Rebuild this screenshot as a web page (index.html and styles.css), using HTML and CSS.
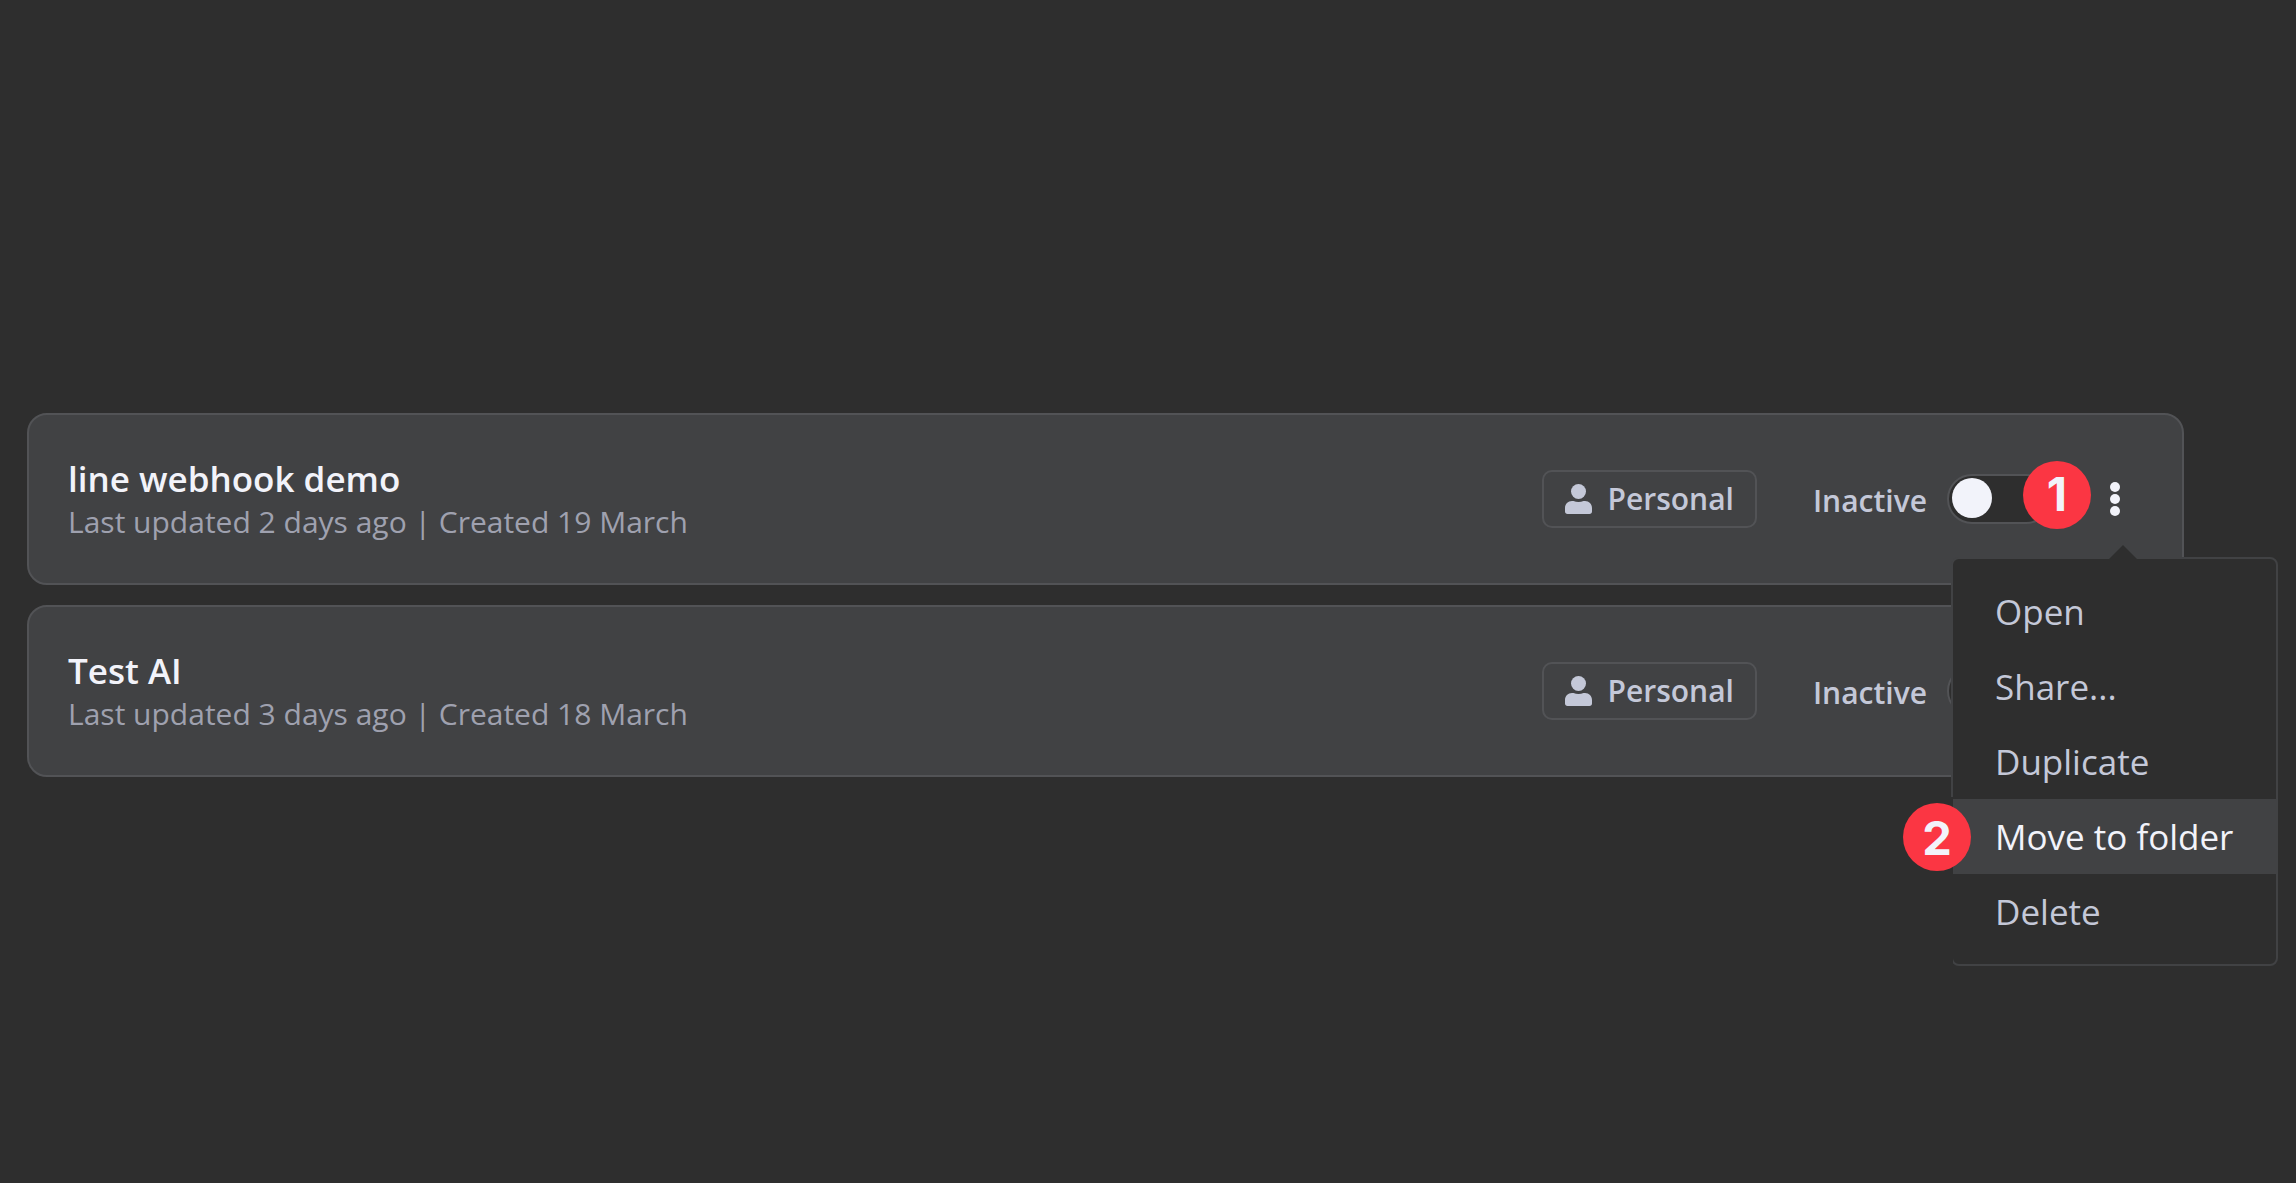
FILE: index.html
```html
<!DOCTYPE html>
<html lang="en">
<head>
<meta charset="utf-8">
<title>Workflows</title>
<link rel="stylesheet" href="styles.css">
</head>
<body>
<main class="workflows">
  <article class="card">
    <div class="card-text">
      <h2 class="card-title">line webhook demo</h2>
      <p class="card-meta">Last updated 2 days ago | Created 19 March</p>
    </div>
    <div class="tag">
      <svg class="tag-icon" viewBox="0 0 27 30" aria-hidden="true"><circle cx="13.500" cy="7.500" r="7.500"/><path d="M7 17h1.500c3 1.300 7 1.300 10 0H20c4 0 7 3 7 7v3.500c0 1.500-1 2.500-2.500 2.500h-22C1 30 0 29 0 27.500V24c0-4 3-7 7-7z"/></svg>
      <span class="tag-label">Personal</span>
    </div>
    <div class="status">
      <label class="status-label" for="active-1">Inactive</label>
      <input class="toggle" id="active-1" type="checkbox" role="switch">
      <span class="badge badge-toggle">1</span>
    </div>
    <div class="actions">
      <button class="kebab" type="button" aria-label="Actions" aria-expanded="true">
        <svg class="kebab-icon" viewBox="0 0 10 34" aria-hidden="true"><circle cx="5" cy="5" r="5"/><circle cx="5" cy="17" r="5"/><circle cx="5" cy="29" r="5"/></svg>
      </button>
      <div class="menu">
        <button class="menu-item" type="button">Open</button>
        <button class="menu-item" type="button">Share...</button>
        <button class="menu-item" type="button">Duplicate</button>
        <button class="menu-item menu-item-active" type="button">Move to folder<span class="badge badge-menu">2</span></button>
        <button class="menu-item" type="button">Delete</button>
      </div>
    </div>
  </article>
  <article class="card">
    <div class="card-text">
      <h2 class="card-title">Test AI</h2>
      <p class="card-meta">Last updated 3 days ago | Created 18 March</p>
    </div>
    <div class="tag">
      <svg class="tag-icon" viewBox="0 0 27 30" aria-hidden="true"><circle cx="13.500" cy="7.500" r="7.500"/><path d="M7 17h1.500c3 1.300 7 1.300 10 0H20c4 0 7 3 7 7v3.500c0 1.500-1 2.500-2.500 2.500h-22C1 30 0 29 0 27.500V24c0-4 3-7 7-7z"/></svg>
      <span class="tag-label">Personal</span>
    </div>
    <div class="status">
      <label class="status-label" for="active-2">Inactive</label>
      <input class="toggle" id="active-2" type="checkbox" role="switch">
    </div>
    <div class="actions">
      <button class="kebab" type="button" aria-label="Actions">
        <svg class="kebab-icon" viewBox="0 0 10 34" aria-hidden="true"><circle cx="5" cy="5" r="5"/><circle cx="5" cy="17" r="5"/><circle cx="5" cy="29" r="5"/></svg>
      </button>
    </div>
  </article>
</main>
</body>
</html>
```
FILE: styles.css
```css
:root {
  --bg: #2e2e2e;
  --surface: #414244;
  --line: #525356;
  --text: #c4c8d8;
  --text-strong: #f2f3fa;
  --text-muted: #9fa1af;
  --accent: #fb3643;
}

* {
  box-sizing: border-box;
}

body {
  margin: 0;
  min-height: 100vh;
  background: var(--bg);
  color: var(--text);
  font-family: "Open Sans", "Noto Sans", sans-serif;
}

button {
  margin: 0;
  border: 0;
  background: none;
  color: inherit;
  font: inherit;
}

.workflows {
  display: flex;
  flex-direction: column;
  gap: 20px;
  padding: 413px 112px 0 27px;
}

.card {
  display: flex;
  align-items: center;
  min-height: 172px;
  padding: 0 47px 0 39px;
  border: 2px solid var(--line);
  border-radius: 20px;
  background: var(--surface);
}

.card-text {
  flex: 1;
  padding-top: 2px;
}

.card-title {
  margin: 0;
  color: var(--text-strong);
  font-size: 35px;
  font-weight: 600;
  line-height: 44px;
}

.card-meta {
  margin: 0;
  color: var(--text-muted);
  font-size: 30px;
  line-height: 42px;
}

.tag {
  display: flex;
  align-items: center;
  gap: 16px;
  height: 58px;
  margin-right: 56px;
  padding: 0 21px;
  border: 2px solid var(--line);
  border-radius: 10px;
  font-size: 30px;
  font-weight: 600;
}

.tag-icon {
  width: 27px;
  height: 30px;
  fill: currentColor;
}

.tag-label {
  padding-bottom: 2px;
}

.status {
  position: relative;
  display: flex;
  align-items: center;
  gap: 20px;
}

.status-label {
  padding-top: 2px;
  font-size: 30px;
  font-weight: 600;
}

.toggle {
  appearance: none;
  display: flex;
  width: 104px;
  height: 50px;
  margin: 0;
  padding: 2px 3px;
  border: 2px solid var(--line);
  border-radius: 25px;
  background: var(--bg);
}

.toggle::before {
  content: "";
  width: 40px;
  height: 40px;
  border-radius: 50%;
  background: var(--text-strong);
}

.badge {
  position: absolute;
  z-index: 1;
  display: flex;
  align-items: center;
  justify-content: center;
  width: 68px;
  height: 68px;
  border-radius: 50%;
  background: var(--accent);
  color: var(--text-strong);
  font-family: Inter, sans-serif;
  font-size: 47px;
  font-weight: 700;
  line-height: 1;
}

.badge-toggle {
  top: -13px;
  right: -40px;
  padding-bottom: 4px;
}

.badge-menu {
  top: 4px;
  left: -50px;
}

.actions {
  position: relative;
  margin-left: 44px;
}

.kebab {
  display: flex;
  align-items: center;
  justify-content: center;
  width: 40px;
  height: 50px;
  padding: 0;
}

.kebab-icon {
  width: 10px;
  height: 34px;
  fill: var(--text-strong);
}

.menu {
  position: absolute;
  z-index: 1;
  top: 83px;
  right: -143px;
  width: 327px;
  padding: 15px 0;
  border: 2px solid var(--surface);
  border-radius: 8px;
  background: var(--bg);
}

.menu::before {
  content: "";
  position: absolute;
  top: -14px;
  right: 139px;
  width: 28px;
  height: 14px;
  background: var(--bg);
  clip-path: polygon(50% 0, 100% 100%, 0 100%);
}

/* The left edge stops at the highlighted item */
.menu::after {
  content: "";
  position: absolute;
  top: 238px;
  bottom: -2px;
  left: -2px;
  width: 2px;
  background: var(--bg);
}

.menu-item {
  position: relative;
  display: block;
  width: 100%;
  height: 75px;
  padding: 0 42px;
  font-size: 35px;
  line-height: 75px;
  text-align: left;
  white-space: nowrap;
}

.menu-item-active {
  background: var(--surface);
  color: var(--text-strong);
}
```
